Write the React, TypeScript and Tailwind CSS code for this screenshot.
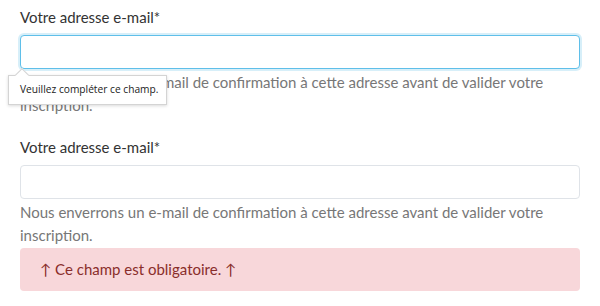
import React from "react";

interface FieldProps {
  focused?: boolean;
  children?: React.ReactNode;
}

function EmailField({focused, children}: FieldProps): React.ReactNode {
  return <div className="relative">
    <label className="block h-[22px] leading-[22px] text-[15px] text-[#333333] mb-[7px]">Votre adresse e-mail*</label>
    <input
        type="email"
        className={`block w-full h-[34px] rounded-[4px] bg-white outline-none border ${focused ? "border-[#5fbfe9] shadow-[0_0_0_2px_rgba(95,191,233,0.25)]" : "border-[#dfe3e8]"}`}
    />
    <p className="mt-[2px] text-[15px] leading-[23px] text-[#777777]">
      Nous enverrons un e-mail de confirmation à cette adresse avant de valider votre inscription.
    </p>
    {children}
  </div>
}

function Tooltip(): React.ReactNode {
  return <div className="absolute left-[-12px] top-[69px] w-[159px] h-[30px] bg-white border border-[#d4d4d4] shadow-[0_1px_3px_rgba(0,0,0,0.15)] flex items-center pl-[11px]">
    <span className="absolute left-[8px] top-[-6px] w-[10px] h-[10px] bg-white border-l border-t border-[#d4d4d4] rotate-45"/>
    <span className="relative whitespace-nowrap text-[10.2px] text-[#222222]" style={{fontFamily: '"Open Sans", "DejaVu Sans", sans-serif'}}>Veuillez compléter ce champ.</span>
  </div>
}

export default function App() {
  return (
      <div className="w-[600px] h-[306px] bg-white px-5 pt-[6px]" style={{fontFamily: 'Lato, "Liberation Sans", sans-serif'}}>
        <EmailField focused>
          <Tooltip/>
        </EmailField>
        <div className="mt-[19px]">
          <EmailField/>
        </div>
        <div className="mt-px h-[43px] rounded-[4px] bg-[#f8d7da] text-[#8a2e2b] text-[15px] flex items-center px-5">
          ↑ Ce champ est obligatoire. ↑
        </div>
      </div>
  );
}
